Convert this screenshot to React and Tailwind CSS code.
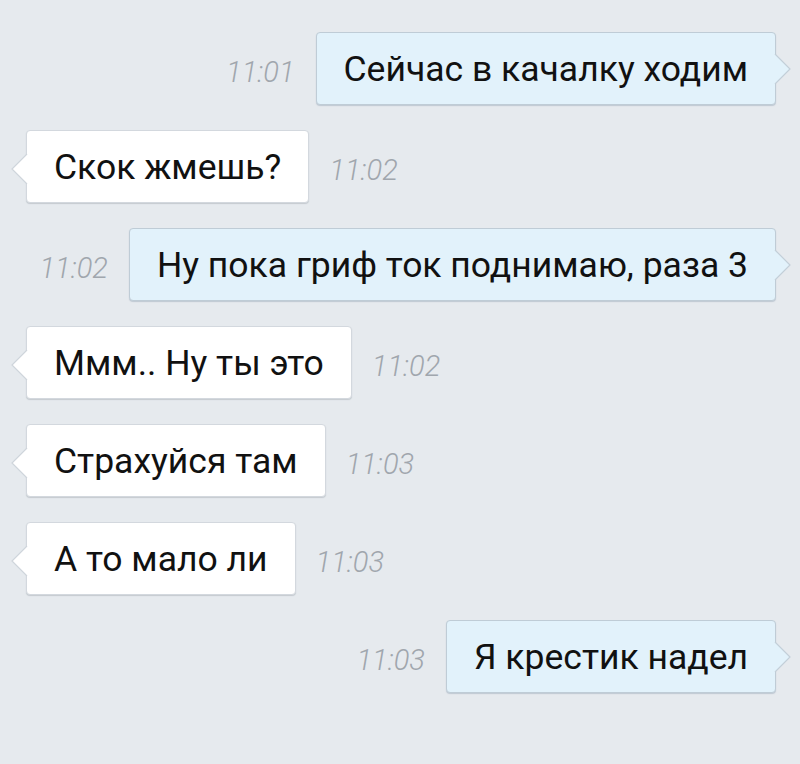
const messages = [
  { out: true, text: 'Сейчас в качалку ходим', time: '11:01' },
  { out: false, text: 'Скок жмешь?', time: '11:02' },
  { out: true, text: 'Ну пока гриф ток поднимаю, раза 3', time: '11:02' },
  { out: false, text: 'Ммм.. Ну ты это', time: '11:02' },
  { out: false, text: 'Страхуйся там', time: '11:03' },
  { out: false, text: 'А то мало ли', time: '11:03' },
  { out: true, text: 'Я крестик надел', time: '11:03' },
];

function Tail({ out }) {
  // little arrow on the bubble side, drawn with the bubble's fill and border
  return (
    <svg
      width="18"
      height="30"
      viewBox="0 0 18 30"
      className={out ? 'absolute -right-[17px] top-[21px]' : 'absolute -left-[17px] top-[23px]'}
    >
      {out ? (
        <path d="M1 0 L16 15 L1 30" fill="#e2f2fb" stroke="#c3cfd8" strokeWidth="1.2" />
      ) : (
        <path d="M17 0 L2 15 L17 30" fill="#ffffff" stroke="#cfd5db" strokeWidth="1.2" />
      )}
    </svg>
  );
}

function Time({ value }) {
  return (
    <span className="font-light italic text-[29px] text-[#a0a6ad] leading-none mt-2">
      {value}
    </span>
  );
}

function Bubble({ out, text }) {
  return (
    <div
      className={
        'relative h-[73px] flex items-center px-[27px] rounded-[4px] border text-[35.5px] text-[#111] ' +
        (out
          ? 'bg-[#e2f2fb] border-[#bfccd6] shadow-[0_1px_1px_rgba(120,140,160,0.35)]'
          : 'bg-white border-[#d3d8de] shadow-[0_1px_1px_rgba(120,130,140,0.3)]')
      }
    >
      <Tail out={out} />
      <span className="relative pt-[3px]">{text}</span>
    </div>
  );
}

export default function App() {
  return (
    <div
      className="w-[800px] h-[764px] bg-[#e6eaee] overflow-hidden pt-[32px] flex flex-col gap-[25px]"
      style={{ fontFamily: 'Roboto, "Noto Sans", sans-serif' }}
    >
      {messages.map((m, i) =>
        m.out ? (
          <div key={i} className="flex items-center justify-end gap-[21px] pr-[24px]">
            <Time value={m.time} />
            <Bubble out text={m.text} />
          </div>
        ) : (
          <div key={i} className="flex items-center gap-[20px] pl-[26px]">
            <Bubble text={m.text} />
            <Time value={m.time} />
          </div>
        )
      )}
    </div>
  );
}
